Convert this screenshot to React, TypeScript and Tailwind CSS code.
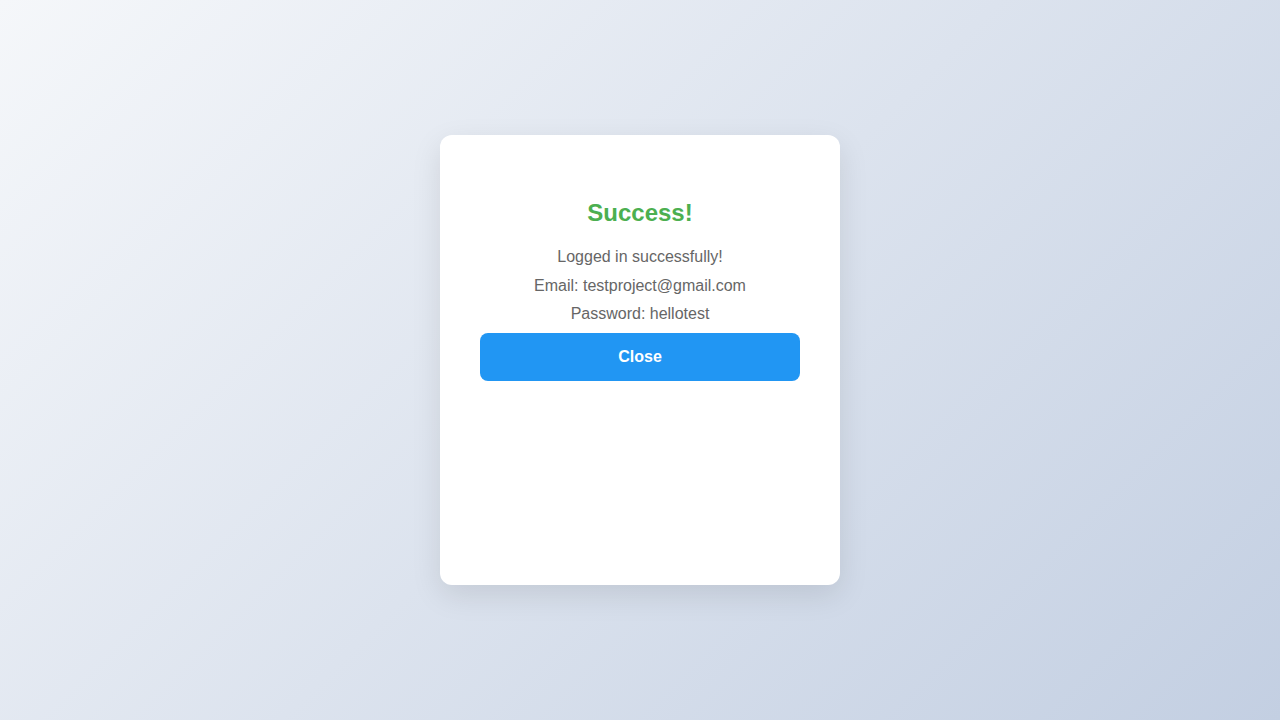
export default function App() {
  return (
    <div
      className="flex h-[720px] w-full items-center justify-center bg-[linear-gradient(135deg,#f5f7fa_0%,#c3cfe2_100%)]"
      style={{ fontFamily: '"Liberation Sans", Arial, sans-serif' }}
    >
      <div className="flex h-[450px] w-[400px] flex-col items-center rounded-xl bg-white px-10 pt-[64px] shadow-[0_10px_30px_rgba(0,0,0,0.1)]">
        <h2 className="text-[24px] font-bold leading-[28px] text-[#4caf50]">Success!</h2>
        <p className="mt-[21px] text-[16px] leading-[18px] text-[#666]">Logged in successfully!</p>
        <p className="mt-[11px] text-[16px] leading-[18px] text-[#666]">Email: testproject@gmail.com</p>
        <p className="mt-[10px] text-[16px] leading-[18px] text-[#666]">Password: hellotest</p>
        <button
          type="button"
          className="mt-[10px] h-12 w-full rounded-lg bg-[#2196f3] text-[16px] font-bold text-white"
        >
          Close
        </button>
      </div>
    </div>
  );
}
